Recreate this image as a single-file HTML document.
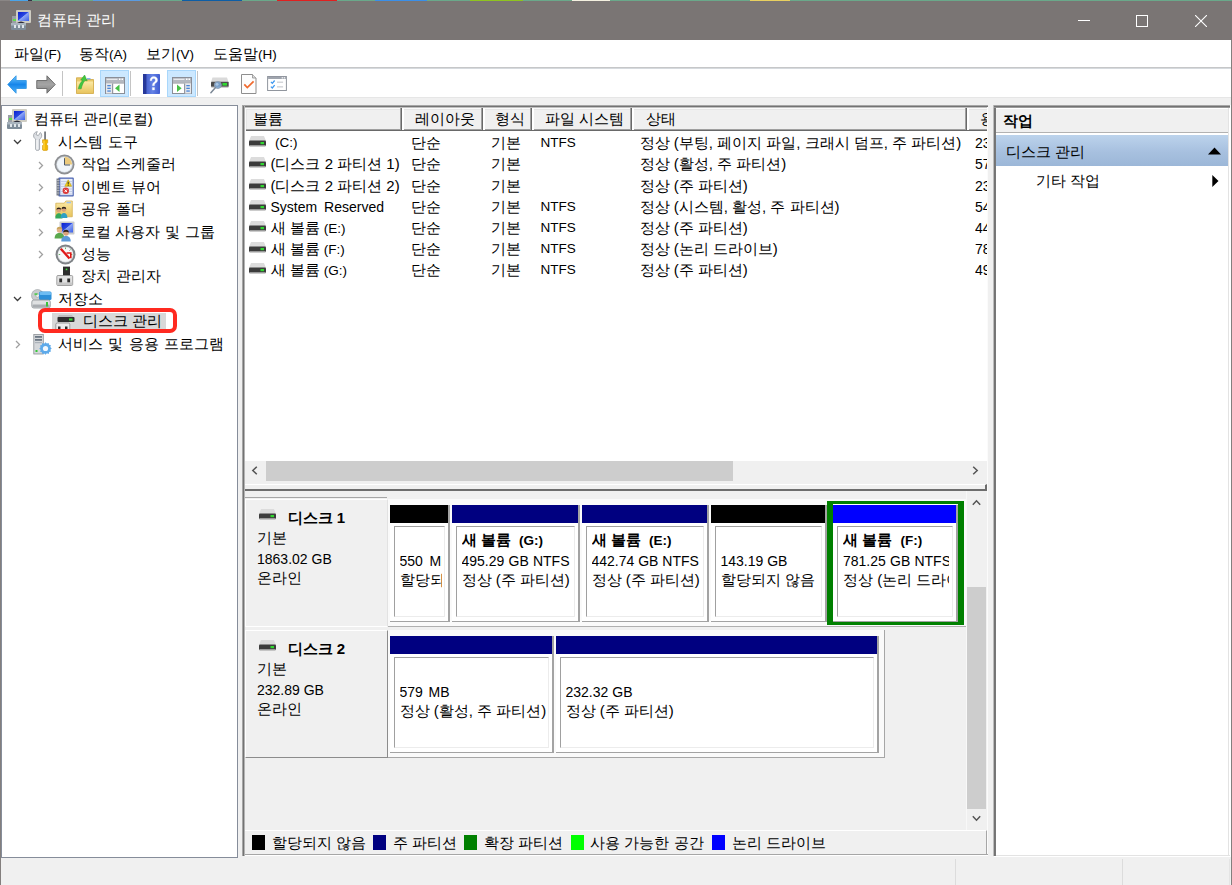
<!DOCTYPE html>
<html lang="ko">
<head>
<meta charset="utf-8">
<title>컴퓨터 관리</title>
<style>
html,body{margin:0;padding:0}
body{width:1232px;height:885px;position:relative;overflow:hidden;background:#f0f0f0;
 font-family:"Liberation Sans",sans-serif;font-size:15px;color:#000}
div,span,svg{position:absolute;box-sizing:border-box}
.t{white-space:nowrap;height:20px;line-height:20px;text-align:justify;text-align-last:justify;overflow:visible}
.b{font-weight:bold}
.l{font-size:14px}
.s{font-size:13.5px}
/* window chrome */
#strip{left:0;top:0;width:1232px;height:1px;background:linear-gradient(90deg,#8a8685 0 10px,#4aa3e8 10px 28px,#334 28px 32px,#6aa88a 32px 93px,#5b9be0 93px 140px,#6aa88a 140px 182px,#0d5ea6 182px 242px,#6aa88a 242px 277px,#e02020 277px 337px,#6aa88a 337px 375px,#3b8fe8 375px 427px,#6aa88a 427px 470px,#8fc31f 470px 523px,#6aa88a 523px 572px,#f4f0e0 572px 610px,#6aa88a 610px 750px,#e8d060 750px 790px,#6aa88a 790px 1232px)}
#title{left:0;top:1px;width:1232px;height:39px;background:#7a7574}
.w{color:#fff}
.p{position:static;font-size:13.5px}
#winL{left:0;top:40px;width:1px;height:845px;background:#837f7e}
#winR{left:1231px;top:40px;width:1px;height:845px;background:#837f7e}
#menu{left:1px;top:40px;width:1230px;height:27px;background:#fff}
#msep{left:1px;top:67px;width:1230px;height:2px;background:linear-gradient(#c6c7c8 0 1px,#d6dade 1px 2px)}
#tool{left:1px;top:69px;width:1230px;height:28px;background:#fff}
#tsep{left:1px;top:97px;width:1230px;height:1px;background:#e6e6e6}
.hl{background:#cce8ff;border:1px solid #a9d7fb}
.vs{width:1px;background:#c4c4c4}
/* panes */
#left{left:1px;top:105px;width:237px;height:753px;background:#fff;border:1px solid #868d9a}
#mid{left:242px;top:105px;width:746px;height:751px;background:#f0f0f0}
#right{left:994px;top:105px;width:237px;height:752px;background:#fff}
#status{left:1px;top:858px;width:1230px;height:27px;background:#f0f0f0}
</style>
</head>
<body>
<div id="strip"></div>
<svg width="0" height="0" style="left:0;top:0">
<defs>
<linearGradient id="gBlue" x1="0" y1="0" x2="0" y2="1"><stop offset="0" stop-color="#6fc6ff"/><stop offset=".5" stop-color="#1686ea"/><stop offset="1" stop-color="#4fb2fa"/></linearGradient>
<linearGradient id="gGray" x1="0" y1="0" x2="0" y2="1"><stop offset="0" stop-color="#8e8e8e"/><stop offset=".5" stop-color="#a4a4a4"/><stop offset="1" stop-color="#7e7e7e"/></linearGradient>
<linearGradient id="gScr" x1="0" y1="0" x2="1" y2="1"><stop offset="0" stop-color="#0a1ed0"/><stop offset=".45" stop-color="#2a48e0"/><stop offset=".5" stop-color="#8fa6f5"/><stop offset="1" stop-color="#3a5fe8"/></linearGradient>
<linearGradient id="gFold" x1="0" y1="0" x2="0" y2="1"><stop offset="0" stop-color="#fbe9a4"/><stop offset="1" stop-color="#e8c45e"/></linearGradient>
<linearGradient id="gHelp" x1="0" y1="0" x2="1" y2="0"><stop offset="0" stop-color="#3a52c4"/><stop offset=".55" stop-color="#6482e6"/><stop offset="1" stop-color="#3f5bd0"/></linearGradient>
<symbol id="drv" viewBox="0 0 17 11"><path d="M2 0h13l2 5H0z" fill="#dcdcdc"/><rect x="0" y="4.5" width="17" height="5.5" rx="1" fill="#3c3c3c"/><rect x="0.5" y="9" width="16" height="1.5" fill="#9a9a9a"/><rect x="11.5" y="6" width="3.5" height="2.2" fill="#2fd72f"/></symbol>
<symbol id="cmp" viewBox="0 0 20 20"><rect x="1" y="6" width="6" height="9" fill="#9aa0a6"/><rect x="2" y="9" width="3" height="2" fill="#5fe04a"/><rect x="5" y="0" width="15" height="13" rx="1" fill="#cfcdc3"/><rect x="7" y="2" width="11" height="9" fill="url(#gScr)"/><path d="M6 13q4-3 8 0z" fill="#2b2b3a"/><rect x="0" y="13" width="15" height="7" rx="1" fill="#7e8c99"/><rect x="0" y="13" width="15" height="2.5" fill="#a9b4be"/><rect x="3" y="15" width="2" height="3" fill="#dfe5ea"/><rect x="7" y="15" width="2" height="3" fill="#dfe5ea"/><rect x="11" y="15" width="2" height="3" fill="#dfe5ea"/></symbol>
<symbol id="winic" viewBox="0 0 20 17"><rect x=".5" y=".5" width="19" height="16" fill="#fff" stroke="#8a8e97"/><rect x="1" y="1" width="18" height="4.500" fill="#b4b8c0"/><rect x="1.500" y="1.800" width="11" height="1" fill="#f4f5f7"/><rect x="14" y="1.500" width="1.500" height="1.500" fill="#fff"/><rect x="16.500" y="1.500" width="1.500" height="1.500" fill="#fff"/><rect x="1" y="5.500" width="18" height="1" fill="#8a8e97"/></symbol>
</defs></svg>
<div id="title"></div>
<svg style="left:11px;top:10px" width="20" height="20"><use href="#cmp"/></svg>
<span class="t w" style="left:36.5px;top:10px;width:78px">컴퓨터 관리</span>
<div style="left:1078px;top:20px;width:12px;height:1px;background:#fff"></div>
<div style="left:1136px;top:15px;width:12px;height:12px;border:1px solid #fff"></div>
<svg style="left:1195px;top:15px" width="12" height="12" viewBox="0 0 12 12"><path d="M0 0L12 12M12 0L0 12" stroke="#fff" stroke-width="1.1"/></svg>
<div id="winL"></div><div id="winR"></div>
<div id="menu"></div>
<span class="t" style="left:14px;top:44px;width:44px">파일<span class="p">(F)</span></span>
<span class="t" style="left:79px;top:44px;width:47px">동작<span class="p">(A)</span></span>
<span class="t" style="left:146px;top:44px;width:47px">보기<span class="p">(V)</span></span>
<span class="t" style="left:213px;top:44px;width:62px">도움말<span class="p">(H)</span></span>
<div id="msep"></div>
<div id="tool"></div>
<div id="tsep"></div>
<!-- toolbar icons -->
<svg style="left:7px;top:75px" width="20" height="19" viewBox="0 0 21 19" preserveAspectRatio="none"><path d="M.8 9.5L9.5.8V5.5H20.2V13.5H9.5V18.2z" fill="url(#gBlue)" stroke="#3a9be6" stroke-width="1" stroke-linejoin="round"/></svg>
<svg style="left:36px;top:75px" width="20" height="19" viewBox="0 0 21 19" preserveAspectRatio="none"><path d="M20.2 9.5L11.5.8V5.5H.8V13.5H11.5V18.2z" fill="url(#gGray)" stroke="#6e6e6e" stroke-width="1" stroke-linejoin="round"/></svg>
<div class="vs" style="left:62px;top:71px;height:25px"></div>
<svg style="left:76px;top:74px" width="19" height="21" viewBox="0 0 19 21"><path d="M.5 3.800h6.300l1 1.700h9.700v14H.5z" fill="#e9c96a" stroke="#cfa640" stroke-width=".8"/><rect x="1" y="7.500" width="16" height="11.600" fill="url(#gFold)"/><rect x="11" y="4.200" width="3.500" height="1.200" fill="#6aa5e8"/><path d="M2.300 14.800C3.200 10.500 4.800 8 6.800 6.500L4.700 6 8.600 1 11.200 6.800 9 6.500C7.300 8.500 6 11 5.200 14.800z" fill="#41c741" stroke="#2f9e2f" stroke-width=".5"/></svg>
<div class="hl" style="left:100px;top:70px;width:29px;height:27px"></div>
<svg style="left:105px;top:77px" width="20" height="17"><use href="#winic"/><rect x="1" y="6.500" width="6" height="10" fill="#e6e8ec"/><rect x="2.300" y="8" width="3.500" height="1.300" fill="#4a86d8"/><rect x="2.300" y="10.700" width="3.500" height="1.300" fill="#4a86d8"/><rect x="2.300" y="13.400" width="3.500" height="1.300" fill="#4a86d8"/><rect x="7" y="6.500" width="1.200" height="10" fill="#9498a0"/><path d="M14.500 7.500v7.500L10 11.200z" fill="#45c045"/></svg>
<div class="vs" style="left:130px;top:71px;height:25px"></div>
<svg style="left:143px;top:74px" width="17" height="20" viewBox="0 0 17 20"><rect width="17" height="20" rx=".8" fill="url(#gHelp)"/><rect width="3.400" height="20" fill="#27389a"/><path d="M7 6.700C7 3.900 8.800 2.500 10.800 2.500c2.200 0 3.800 1.400 3.800 3.400 0 1.600-.9 2.400-1.900 3.200-.9.700-1.200 1.200-1.200 2.600h-2.100c0-1.900.6-2.700 1.600-3.500.8-.6 1.300-1.100 1.300-2.100s-.7-1.700-1.700-1.700c-1.200 0-1.800.8-1.800 2.300zM9.300 13.500h2.300v2.500H9.300z" fill="#fff" stroke="#dfe6f8" stroke-width=".3"/></svg>
<div class="hl" style="left:167px;top:70px;width:29px;height:27px"></div>
<svg style="left:172px;top:77px" width="20" height="17"><use href="#winic"/><rect x="13" y="6.500" width="6" height="10" fill="#e6e8ec"/><rect x="12" y="6.500" width="1.200" height="10" fill="#9498a0"/><rect x="14.300" y="8" width="3.500" height="1.300" fill="#4a86d8"/><rect x="14.300" y="10.700" width="3.500" height="1.300" fill="#4a86d8"/><rect x="14.300" y="13.400" width="3.500" height="1.300" fill="#4a86d8"/><path d="M5 7.500v7.500l4.600-3.800z" fill="#45c045"/></svg>
<div class="vs" style="left:197px;top:71px;height:25px"></div>
<svg style="left:210px;top:77px" width="20" height="17" viewBox="0 0 20 17"><path d="M2.500 .5h14.500l1.500 4.500H1z" fill="#dadada"/><rect x="1" y="4.800" width="17.700" height="5.200" rx=".8" fill="#4c4c4c"/><rect x="1.300" y="9.600" width="17.100" height="1.200" fill="#c4c4c4"/><rect x="12.500" y="6" width="4.500" height="2.600" fill="#2fd72f"/><circle cx="7.800" cy="8" r="3.500" fill="#7da7d4" fill-opacity=".9" stroke="#8f9db0" stroke-width=".9"/><circle cx="7" cy="7.200" r="1.500" fill="#b7d0ea" fill-opacity=".8"/><path d="M5.300 10.800L.9 15.800" stroke="#7c8896" stroke-width="1.500" stroke-linecap="round"/></svg>
<svg style="left:241px;top:74px" width="16" height="20" viewBox="0 0 16 20"><path d="M.5.5h11l3.500 3.500v15.500H.5z" fill="#fdfdfd" stroke="#8e8e8e"/><path d="M11.500.5v3.500h3.500" fill="#dedede" stroke="#8e8e8e" stroke-width=".8"/><path d="M3.300 10.300l3 3.200 6.300-6.200" fill="none" stroke="#f06a2e" stroke-width="1.700"/></svg>
<svg style="left:267px;top:76px" width="20" height="15" viewBox="0 0 21 16"><rect x=".5" y=".5" width="20" height="15" fill="#fff" stroke="#8a8f98"/><rect x="1" y="1" width="19" height="2.200" fill="#a0a5ae"/><rect x="15.500" y="1.300" width="1.300" height="1.300" fill="#fff"/><rect x="17.700" y="1.300" width="1.300" height="1.300" fill="#fff"/><path d="M4 6.300l1.500 1.500 2.500-3M4 11.300l1.500 1.500 2.500-3" fill="none" stroke="#419af0" stroke-width="1.400"/><rect x="10.500" y="6" width="6.500" height="1.200" fill="#c6c9ce"/><rect x="10.500" y="11" width="6.500" height="1.200" fill="#c6c9ce"/></svg>
<div id="left"></div>
<svg style="left:7px;top:109.0px" width="20" height="20"><use href="#cmp"/></svg>
<span class="t" style="left:33.5px;top:109px;width:118px">컴퓨터 관리(로컬)</span>
<svg style="left:12.6px;top:139.4px" width="9" height="6" viewBox="0 0 9 6"><path d="M1 1l3.500 3.500L8 1" fill="none" stroke="#3c3c3c" stroke-width="1.300"/></svg>
<svg style="left:33px;top:131px" width="16" height="20" viewBox="0 0 16 20"><path d="M4.300.6C2 .9.400 2.800.6 5c.1 1.400.9 2.500 2 3.100V18.200c0 1.600 4 1.600 4 0V8.100C8 7.300 8.900 5.800 8.700 4.100 8.600 3 8.100 2.100 7.400 1.500L5.300 4.600 3 3.600z" fill="#dfe2e6" stroke="#8b9098" stroke-width=".7"/><path d="M4 9v9.500" stroke="#fff" stroke-width="1"/><rect x="11.300" y=".5" width="1.500" height="8.500" fill="#5a5f66"/><path d="M9.500 8.800h5.200v3l-1 1 .0 .8 1 .9v4.200c0 1.200-5.200 1.200-5.200 0v-4.200l1-.9v-.8l-1-1z" fill="#f3b700" stroke="#c98f00" stroke-width=".5"/><path d="M11 9.500v9" stroke="#ffd95a" stroke-width="1"/></svg>
<span class="t" style="left:58px;top:131.9px;width:80px">시스템 도구</span>
<svg style="left:38px;top:160.7px" width="6" height="9" viewBox="0 0 6 9"><path d="M1 1l3.500 3.500L1 8" fill="none" stroke="#a0a0a0" stroke-width="1.300"/></svg>
<svg style="left:54.300px;top:153.500px" width="21" height="21" viewBox="0 0 21 21"><circle cx="10.500" cy="10.500" r="10" fill="#8d8f92"/><circle cx="10.500" cy="10.500" r="8.300" fill="#c9cfd6"/><circle cx="10.500" cy="10.500" r="7.500" fill="#f1f6fb"/><path d="M10.500 10.500V2.800A7.700 7.700 0 0 1 18.200 10.500z" fill="#ecca7c"/><path d="M10.500 4.200V11h5.500" fill="none" stroke="#4c5866" stroke-width="1"/></svg>
<span class="t" style="left:80.5px;top:154.3px;width:96px">작업 스케줄러</span>
<svg style="left:38px;top:183.2px" width="6" height="9" viewBox="0 0 6 9"><path d="M1 1l3.500 3.500L1 8" fill="none" stroke="#a0a0a0" stroke-width="1.300"/></svg>
<svg style="left:55.500px;top:176.800px" width="19" height="20" viewBox="0 0 19 20"><rect x="2.300" y=".6" width="15.500" height="18.800" rx="1" fill="#5068b4"/><rect x="4.300" y="1.800" width="12.300" height="16.400" fill="#e6ecf8"/><path d="M4.500 4.500h12M4.500 7h12M4.500 9.500h12M4.500 12h12M4.500 14.500h12M4.500 17h12" stroke="#b4c0e0" stroke-width=".7"/><rect x=".5" y="1.500" width="2.800" height="17" fill="#787e8a"/><path d="M.5 3.500h3M.5 6h3M.5 8.500h3M.5 11h3M.5 13.500h3M.5 16h3" stroke="#c8ccd4" stroke-width=".7"/><path d="M12.200 2.800l3.400 6.400H8.800z" fill="#f5d21a" stroke="#b89600" stroke-width=".5"/><rect x="11.700" y="4.800" width="1" height="2.600" fill="#2a2a2a"/><rect x="11.700" y="7.900" width="1" height=".8" fill="#2a2a2a"/><circle cx="9.800" cy="13.800" r="3.200" fill="#dc3a3a"/><path d="M8.600 12.600l2.400 2.400M11 12.600l-2.400 2.400" stroke="#fff" stroke-width="1"/></svg>
<span class="t" style="left:80.5px;top:176.8px;width:80.5px">이벤트 뷰어</span>
<svg style="left:38px;top:205.6px" width="6" height="9" viewBox="0 0 6 9"><path d="M1 1l3.500 3.500L1 8" fill="none" stroke="#a0a0a0" stroke-width="1.300"/></svg>
<svg style="left:54.500px;top:199.200px" width="20" height="20" viewBox="0 0 20 20"><path d="M.8 4.200h8.500l1.500-2.200h6.500v15.800H.8z" fill="url(#gFold)" stroke="#d0aa48" stroke-width=".7"/><rect x="11.500" y="2.800" width="4.500" height="1.500" fill="#9cc0ee"/><path d="M.3 19.500c0-3.800 1.600-5.200 3.600-5.200s3.600 1.400 3.600 5.200z" fill="#35a85a"/><path d="M5.600 19c0-3.600 1.500-5 3.400-5s3.400 1.400 3.400 5z" fill="#2f9fc4"/><circle cx="3.800" cy="11.200" r="2.300" fill="#d9a27a"/><path d="M1.400 10.800a2.400 2.400 0 0 1 4.800 0c-1.200-1-3.600-1-4.800 0z" fill="#2e221b"/><circle cx="8.900" cy="10.600" r="2.300" fill="#d9a27a"/><path d="M6.500 10.200a2.400 2.400 0 0 1 4.800 0c-1.200-1-3.600-1-4.800 0z" fill="#2e221b"/></svg>
<span class="t" style="left:80.5px;top:199.2px;width:66px">공유 폴더</span>
<svg style="left:38px;top:228.0px" width="6" height="9" viewBox="0 0 6 9"><path d="M1 1l3.500 3.500L1 8" fill="none" stroke="#a0a0a0" stroke-width="1.300"/></svg>
<svg style="left:54px;top:221.100px" width="21" height="21" viewBox="0 0 21 21"><rect x="5.500" y=".5" width="15" height="13" rx="1" fill="#c9cacc"/><rect x="7.500" y="2" width="11.500" height="9.500" fill="url(#gScr)"/><path d="M.6 17.500c0-4 2.100-5.600 4.900-5.600s4.900 1.600 4.900 5.600z" fill="#5aa84e"/><circle cx="5.500" cy="9" r="2.700" fill="#e2b48a"/><path d="M2.700 8.600a2.800 2.800 0 0 1 5.600 0c-1.400-1.100-4.200-1.100-5.600 0z" fill="#c9a45c"/><path d="M7.300 20.500c0-3.900 2-5.400 4.700-5.400s4.700 1.500 4.700 5.400z" fill="#5d9ad8"/><circle cx="12" cy="12" r="2.700" fill="#d9a27a"/><path d="M9.200 11.600a2.800 2.800 0 0 1 5.600 0c-1.400-1.100-4.200-1.100-5.600 0z" fill="#2e221b"/></svg>
<span class="t" style="left:80.5px;top:221.6px;width:135px">로컬 사용자 및 그룹</span>
<svg style="left:38px;top:250.4px" width="6" height="9" viewBox="0 0 6 9"><path d="M1 1l3.500 3.500L1 8" fill="none" stroke="#a0a0a0" stroke-width="1.300"/></svg>
<svg style="left:54.500px;top:243.500px" width="21" height="21" viewBox="0 0 21 21"><circle cx="10.500" cy="10.500" r="10" fill="#7f8387"/><circle cx="10.500" cy="10.500" r="8" fill="#d5d9dc"/><circle cx="10.500" cy="10.500" r="7.300" fill="#f8f9fa"/><path d="M10.500 3.500v1.600M15.500 5.500l-1 1.100M5.500 5.500l1 1.100M17.300 10.500h-1.500M3.700 10.500h1.500" stroke="#5aa85a" stroke-width=".9"/><path d="M5.800 4.800l8.700 9.700" stroke="#e01818" stroke-width="2.300"/><path d="M11.500 9h4.300v5.300" fill="none" stroke="#e01818" stroke-width="1.600"/></svg>
<span class="t" style="left:80.5px;top:244.0px;width:31px">성능</span>
<svg style="left:55.500px;top:266.400px" width="18" height="20" viewBox="0 0 18 20"><rect x="7" y=".6" width="7" height="9.400" fill="#2d2d2d"/><rect x="9.700" y="2.600" width="1.600" height="1.600" fill="#45e045"/><path d="M.8 10.700q0-1.200 1.200-1.200h13.500q1.200 0 1.200 1.200v7.600q0 1.200-1.200 1.200H2q-1.200 0-1.200-1.200z" fill="#e2e2e2" stroke="#8c8c8c" stroke-width=".8"/><rect x="1.300" y="16.500" width="14.900" height="2.500" fill="#c8c8c8"/><rect x="3.300" y="12.500" width="2.800" height="3.800" fill="#2d2d2d"/><rect x="11.300" y="12.500" width="2.800" height="3.800" fill="#2d2d2d"/></svg>
<span class="t" style="left:80.5px;top:266.4px;width:80.5px">장치 관리자</span>
<svg style="left:12.6px;top:296.4px" width="9" height="6" viewBox="0 0 9 6"><path d="M1 1l3.500 3.500L8 1" fill="none" stroke="#3c3c3c" stroke-width="1.300"/></svg>
<svg style="left:31px;top:288.9px" width="21" height="20" viewBox="0 0 21 20"><circle cx="6.500" cy="6.500" r="6" fill="#c9ccce" stroke="#9a9fa3" stroke-width=".6"/><circle cx="6.500" cy="6.500" r="1.800" fill="#f3f3f3" stroke="#8f9498" stroke-width=".5"/><rect x="3.500" y="4.200" width="3" height="2" fill="#58c858"/><rect x="8" y="2.500" width="12.500" height="8.500" rx="1.500" fill="#2c8fd8"/><rect x="8.500" y="3" width="11.500" height="3" rx="1" fill="#6dbcf2"/><rect x=".8" y="11" width="18.500" height="8" rx="2" fill="#dfe1e2" stroke="#8e9397" stroke-width=".8"/><rect x="1.500" y="15.500" width="17" height="3" rx="1" fill="#a9adb1"/><rect x="15" y="13" width="2" height="4.500" fill="#3bc43b"/></svg>
<span class="t" style="left:58px;top:288.9px;width:43.5px">저장소</span>
<div style="left:52px;top:313px;width:114px;height:17px;background:#d8d8d8"></div>
<svg style="left:55px;top:314px" width="20" height="16" viewBox="0 0 20 16"><path d="M4 1h13l2 3H2z" fill="#bdbdbd"/><rect x="2.500" y="3" width="17" height="5" rx="1" fill="#2e2e2e"/><rect x="14" y="4.500" width="3.500" height="2" fill="#35e035"/><path d="M.8 10.500q0-1.500 1.500-1.500h11q1.500 0 1.500 1.500V16H.8z" fill="#ececec" stroke="#8a8a8a" stroke-width=".8"/><rect x="3" y="12.500" width="2.500" height="3.500" fill="#2b2b2b"/><rect x="10" y="12.500" width="2.500" height="3.500" fill="#2b2b2b"/></svg>
<span class="t" style="left:82.5px;top:311.3px;width:76.5px">디스크 관리</span>
<div style="left:38px;top:308px;width:139px;height:25px;border:4px solid #ff2a20;border-radius:7px"></div>
<svg style="left:14.5px;top:340.1px" width="6" height="9" viewBox="0 0 6 9"><path d="M1 1l3.500 3.500L1 8" fill="none" stroke="#a0a0a0" stroke-width="1.300"/></svg>
<svg style="left:33px;top:333.7px" width="19" height="21" viewBox="0 0 19 21"><rect x=".8" y=".5" width="9.500" height="19.500" fill="#d5d8db" stroke="#8c9196" stroke-width=".8"/><rect x="2" y="2" width="7" height="1.800" fill="#6b7784"/><rect x="2" y="5" width="7" height="1.800" fill="#6b7784"/><rect x="2" y="8" width="7" height="1.200" fill="#aab1b8"/><rect x="2.500" y="16" width="2" height="2" fill="#37c837"/><g transform="translate(12.500 14.500)"><path d="M0-6.200l1.300 1.300 1.800-.6.500 1.800 1.800.5-.6 1.800L6.200 0 4.900 1.300l.6 1.800-1.800.5-.5 1.800-1.800-.6L0 6.200-1.300 4.900l-1.800.6-.5-1.800-1.800-.5.600-1.800L-6.200 0l1.300-1.300-.6-1.800 1.800-.5.500-1.800 1.800.6z" fill="#5eaaea"/><circle r="2.600" fill="#f2f8fe"/></g></svg>
<span class="t" style="left:58px;top:333.7px;width:166px">서비스 및 응용 프로그램</span>
<div id="mid"></div>
<div style="left:245px;top:107px;width:742px;height:378px;background:#fff"></div>
<div style="left:245px;top:108px;width:742px;height:23px;background:#f0f0f0;border-top:1px solid #fafafa;border-left:1px solid #fafafa;box-shadow:inset 0 -1px 0 #696969,inset 0 -2px 0 #a0a0a0,inset 1px 1px 0 #e6e6e6"></div>
<div style="left:400px;top:108px;width:4px;height:22px;background:linear-gradient(90deg,#a0a0a0 0 1px,#696969 1px 2px,#fff 2px 4px)"></div>
<div style="left:401px;top:107px;width:1px;height:24px;background:#696969"></div>
<div style="left:481px;top:108px;width:4px;height:22px;background:linear-gradient(90deg,#a0a0a0 0 1px,#696969 1px 2px,#fff 2px 4px)"></div>
<div style="left:482px;top:107px;width:1px;height:24px;background:#696969"></div>
<div style="left:530px;top:108px;width:4px;height:22px;background:linear-gradient(90deg,#a0a0a0 0 1px,#696969 1px 2px,#fff 2px 4px)"></div>
<div style="left:531px;top:107px;width:1px;height:24px;background:#696969"></div>
<div style="left:630px;top:108px;width:4px;height:22px;background:linear-gradient(90deg,#a0a0a0 0 1px,#696969 1px 2px,#fff 2px 4px)"></div>
<div style="left:631px;top:107px;width:1px;height:24px;background:#696969"></div>
<div style="left:965px;top:108px;width:4px;height:22px;background:linear-gradient(90deg,#a0a0a0 0 1px,#696969 1px 2px,#fff 2px 4px)"></div>
<div style="left:966px;top:107px;width:1px;height:24px;background:#696969"></div>
<span class="t" style="left:252.5px;top:109px;width:29px">볼륨</span>
<span class="t" style="left:415px;top:109px;width:60px">레이아웃</span>
<span class="t" style="left:495px;top:109px;width:29px">형식</span>
<span class="t" style="left:545px;top:109px;width:78.5px">파일 시스템</span>
<span class="t" style="left:646px;top:109px;width:29px">상태</span>
<div style="left:980px;top:109px;width:7px;height:20px;overflow:hidden"><span class="t" style="left:0;top:0">용량</span></div>
<svg style="left:249px;top:136.1px" width="17" height="11"><use href="#drv"/></svg>
<span class="t s" style="left:275px;top:133.1px;width:21px">(C:)</span>
<span class="t" style="left:411px;top:133.1px;width:29px">단순</span>
<span class="t" style="left:491px;top:133.1px;width:29px">기본</span>
<span class="t s" style="left:540.5px;top:133.1px;width:33.5px">NTFS</span>
<span class="t" style="left:639.5px;top:133.1px;width:320px">정상 (부팅, 페이지 파일, 크래시 덤프, 주 파티션)</span>
<div style="left:975px;top:133.1px;width:12px;height:20px;overflow:hidden"><span class="t l" style="left:0;top:0">237</span></div>
<svg style="left:249px;top:157.3px" width="17" height="11"><use href="#drv"/></svg>
<span class="t" style="left:270.5px;top:154.3px;width:127px">(디스크 2 파티션 1)</span>
<span class="t" style="left:411px;top:154.3px;width:29px">단순</span>
<span class="t" style="left:491px;top:154.3px;width:29px">기본</span>
<span class="t" style="left:639.5px;top:154.3px;width:144.5px">정상 (활성, 주 파티션)</span>
<div style="left:975px;top:154.3px;width:12px;height:20px;overflow:hidden"><span class="t l" style="left:0;top:0">579</span></div>
<svg style="left:249px;top:178.5px" width="17" height="11"><use href="#drv"/></svg>
<span class="t" style="left:270.5px;top:175.5px;width:127px">(디스크 2 파티션 2)</span>
<span class="t" style="left:411px;top:175.5px;width:29px">단순</span>
<span class="t" style="left:491px;top:175.5px;width:29px">기본</span>
<span class="t" style="left:639.5px;top:175.5px;width:107px">정상 (주 파티션)</span>
<div style="left:975px;top:175.5px;width:12px;height:20px;overflow:hidden"><span class="t l" style="left:0;top:0">232</span></div>
<svg style="left:249px;top:199.7px" width="17" height="11"><use href="#drv"/></svg>
<span class="t l" style="left:270.5px;top:196.7px;width:113.5px">System Reserved</span>
<span class="t" style="left:411px;top:196.7px;width:29px">단순</span>
<span class="t" style="left:491px;top:196.7px;width:29px">기본</span>
<span class="t s" style="left:540.5px;top:196.7px;width:33.5px">NTFS</span>
<span class="t" style="left:639.5px;top:196.7px;width:196px">정상 (시스템, 활성, 주 파티션)</span>
<div style="left:975px;top:196.7px;width:12px;height:20px;overflow:hidden"><span class="t l" style="left:0;top:0">549</span></div>
<svg style="left:249px;top:220.9px" width="17" height="11"><use href="#drv"/></svg>
<span class="t" style="left:270.5px;top:217.9px;width:72.5px">새 볼륨 <span class="p">(E:)</span></span>
<span class="t" style="left:411px;top:217.9px;width:29px">단순</span>
<span class="t" style="left:491px;top:217.9px;width:29px">기본</span>
<span class="t s" style="left:540.5px;top:217.9px;width:33.5px">NTFS</span>
<span class="t" style="left:639.5px;top:217.9px;width:107px">정상 (주 파티션)</span>
<div style="left:975px;top:217.9px;width:12px;height:20px;overflow:hidden"><span class="t l" style="left:0;top:0">442</span></div>
<svg style="left:249px;top:242.1px" width="17" height="11"><use href="#drv"/></svg>
<span class="t" style="left:270.5px;top:239.1px;width:72px">새 볼륨 <span class="p">(F:)</span></span>
<span class="t" style="left:411px;top:239.1px;width:29px">단순</span>
<span class="t" style="left:491px;top:239.1px;width:29px">기본</span>
<span class="t s" style="left:540.5px;top:239.1px;width:33.5px">NTFS</span>
<span class="t" style="left:639.5px;top:239.1px;width:137px">정상 (논리 드라이브)</span>
<div style="left:975px;top:239.1px;width:12px;height:20px;overflow:hidden"><span class="t l" style="left:0;top:0">781</span></div>
<svg style="left:249px;top:263.3px" width="17" height="11"><use href="#drv"/></svg>
<span class="t" style="left:270.5px;top:260.3px;width:74.5px">새 볼륨 <span class="p">(G:)</span></span>
<span class="t" style="left:411px;top:260.3px;width:29px">단순</span>
<span class="t" style="left:491px;top:260.3px;width:29px">기본</span>
<span class="t s" style="left:540.5px;top:260.3px;width:33.5px">NTFS</span>
<span class="t" style="left:639.5px;top:260.3px;width:107px">정상 (주 파티션)</span>
<div style="left:975px;top:260.3px;width:12px;height:20px;overflow:hidden"><span class="t l" style="left:0;top:0">495</span></div>
<div style="left:245px;top:461px;width:742px;height:24px;background:#f0f0f0"></div>
<div style="left:266px;top:461px;width:467px;height:20px;background:#cdcdcd"></div>
<svg style="left:251px;top:466px" width="7" height="9" viewBox="0 0 7 9"><path d="M5.800.8L1.800 4.500 5.800 8.200" fill="none" stroke="#555" stroke-width="1.500"/></svg>
<svg style="left:972px;top:466px" width="7" height="9" viewBox="0 0 7 9"><path d="M1.200.8L5.200 4.500 1.200 8.200" fill="none" stroke="#555" stroke-width="1.500"/></svg>
<div style="left:245px;top:484px;width:742px;height:7px;background:#f0f0f0;border-top:1px solid #fff;border-bottom:2px solid #6d6d6d;border-right:2px solid #6d6d6d"></div>
<div style="left:242px;top:105px;width:746px;height:3px;background:linear-gradient(#a6a6a6 0 1px,#737373 1px 2px,#c0c0c0 2px 3px)"></div>
<div style="left:242px;top:106px;width:3px;height:750px;background:linear-gradient(90deg,#a6a6a6 0 1px,#737373 1px 2px,#b4b4b4 2px 3px)"></div>
<div style="left:987px;top:107px;width:1px;height:748px;background:#fbfbfb"></div>
<div style="left:245px;top:854px;width:743px;height:2px;background:linear-gradient(#a6a6a6 0 1px,#fff 1px 2px)"></div>
<div style="left:245px;top:497px;width:142px;height:1px;background:#a6a6a6"></div>
<div style="left:245px;top:499px;width:143px;height:128px;background:#f0f0f0;border-top:1px solid #fff;border-left:1px solid #fff;border-right:1px solid #e2e2e2;border-bottom:1px solid #fff;"></div>
<svg style="left:258.5px;top:508.5px" width="17" height="11"><use href="#drv"/></svg>
<span class="t b" style="left:287.5px;top:508.0px;width:56px">디스크 1</span>
<span class="t" style="left:257px;top:527.5px;width:29px">기본</span>
<span class="t l" style="left:257px;top:548.5px">1863.02 GB</span>
<span class="t" style="left:257px;top:568.0px;width:43px">온라인</span>
<div style="left:388px;top:499px;width:578px;height:128px;background:#fafafa;border-bottom:1px solid #b0b0b0"></div>
<div style="left:390px;top:505px;width:60px;height:117px;background:#a3a3a3"></div>
<div style="left:390px;top:505px;width:58px;height:116px;background:#fff"></div>
<div style="left:390px;top:505px;width:58px;height:18px;background:#000"></div>
<div style="left:394px;top:526px;width:51px;height:91px;border-left:1px solid #a0a0a0;border-top:1px solid #a0a0a0;border-right:1px solid #ececec;border-bottom:1px solid #ececec"></div>
<div style="left:399.5px;top:527px;width:42px;height:88px;overflow:hidden">
<span class="t l" style="left:0;top:24.0px;width:51px">550 MB</span>
<span class="t" style="left:0;top:43.3px">할당되지 않음</span>
</div>
<div style="left:452px;top:505px;width:128px;height:117px;background:#a3a3a3"></div>
<div style="left:452px;top:505px;width:126px;height:116px;background:#fff"></div>
<div style="left:452px;top:505px;width:126px;height:18px;background:#000080"></div>
<div style="left:456px;top:526px;width:119px;height:91px;border-left:1px solid #a0a0a0;border-top:1px solid #a0a0a0;border-right:1px solid #ececec;border-bottom:1px solid #ececec"></div>
<div style="left:461.5px;top:527px;width:112px;height:88px;overflow:hidden">
<span class="t b" style="left:0;top:3.2px">새 볼륨&nbsp; <span class="p">(G:)</span></span>
<span class="t l" style="left:0;top:24.0px;width:108px">495.29 GB NTFS</span>
<span class="t" style="left:0;top:43.3px;width:108px">정상 (주 파티션)</span>
</div>
<div style="left:582px;top:505px;width:127px;height:117px;background:#a3a3a3"></div>
<div style="left:582px;top:505px;width:125px;height:116px;background:#fff"></div>
<div style="left:582px;top:505px;width:125px;height:18px;background:#000080"></div>
<div style="left:586px;top:526px;width:118px;height:91px;border-left:1px solid #a0a0a0;border-top:1px solid #a0a0a0;border-right:1px solid #ececec;border-bottom:1px solid #ececec"></div>
<div style="left:591.5px;top:527px;width:111px;height:88px;overflow:hidden">
<span class="t b" style="left:0;top:3.2px">새 볼륨&nbsp; <span class="p">(E:)</span></span>
<span class="t l" style="left:0;top:24.0px;width:107px">442.74 GB NTFS</span>
<span class="t" style="left:0;top:43.3px;width:108px">정상 (주 파티션)</span>
</div>
<div style="left:711px;top:505px;width:116px;height:117px;background:#a3a3a3"></div>
<div style="left:711px;top:505px;width:114px;height:116px;background:#fff"></div>
<div style="left:711px;top:505px;width:114px;height:18px;background:#000"></div>
<div style="left:715px;top:526px;width:107px;height:91px;border-left:1px solid #a0a0a0;border-top:1px solid #a0a0a0;border-right:1px solid #ececec;border-bottom:1px solid #ececec"></div>
<div style="left:720.5px;top:527px;width:100px;height:88px;overflow:hidden">
<span class="t l" style="left:0;top:24.0px;width:66.5px">143.19 GB</span>
<span class="t" style="left:0;top:43.3px;width:92.5px">할당되지 않음</span>
</div>
<div style="left:827px;top:501px;width:137px;height:124px;background:#008000"></div>
<div style="left:833px;top:504px;width:125px;height:118px;background:#f0f0f0"></div>
<div style="left:833px;top:505px;width:125px;height:117px;background:#a3a3a3"></div>
<div style="left:833px;top:504px;width:123px;height:117px;background:#fff"></div>
<div style="left:833px;top:505px;width:123px;height:18px;background:#0000ff"></div>
<div style="left:837px;top:526px;width:116px;height:91px;border-left:1px solid #a0a0a0;border-top:1px solid #a0a0a0;border-right:1px solid #ececec;border-bottom:1px solid #ececec"></div>
<div style="left:843px;top:527px;width:106px;height:88px;overflow:hidden">
<span class="t b" style="left:0;top:3.2px">새 볼륨&nbsp; <span class="p">(F:)</span></span>
<span class="t l" style="left:0;top:24.0px;width:108px">781.25 GB NTFS</span>
<span class="t" style="left:0;top:43.3px;width:137px">정상 (논리 드라이브)</span>
</div>
<div style="left:245px;top:630px;width:143px;height:128px;background:#f0f0f0;border-top:1px solid #fff;border-left:1px solid #fff;border-right:1px solid #8c8c8c;border-bottom:1px solid #8c8c8c;"></div>
<svg style="left:258.5px;top:639.5px" width="17" height="11"><use href="#drv"/></svg>
<span class="t b" style="left:287.5px;top:639.0px;width:56px">디스크 2</span>
<span class="t" style="left:257px;top:658.5px;width:29px">기본</span>
<span class="t l" style="left:257px;top:679.5px">232.89 GB</span>
<span class="t" style="left:257px;top:699.0px;width:43px">온라인</span>
<div style="left:388px;top:630px;width:497px;height:128px;background:#fafafa;border-right:1px solid #a6a6a6;border-bottom:1px solid #a6a6a6"></div>
<div style="left:390px;top:636px;width:164px;height:117px;background:#a3a3a3"></div>
<div style="left:390px;top:636px;width:162px;height:116px;background:#fff"></div>
<div style="left:390px;top:636px;width:162px;height:18px;background:#000080"></div>
<div style="left:394px;top:657px;width:155px;height:91px;border-left:1px solid #a0a0a0;border-top:1px solid #a0a0a0;border-right:1px solid #ececec;border-bottom:1px solid #ececec"></div>
<div style="left:399.5px;top:658px;width:148px;height:88px;overflow:hidden">
<span class="t l" style="left:0;top:24.0px;width:50px">579 MB</span>
<span class="t" style="left:0;top:43.3px;width:144px">정상 (활성, 주 파티션)</span>
</div>
<div style="left:556px;top:636px;width:323px;height:117px;background:#a3a3a3"></div>
<div style="left:556px;top:636px;width:321px;height:116px;background:#fff"></div>
<div style="left:556px;top:636px;width:321px;height:18px;background:#000080"></div>
<div style="left:560px;top:657px;width:314px;height:91px;border-left:1px solid #a0a0a0;border-top:1px solid #a0a0a0;border-right:1px solid #ececec;border-bottom:1px solid #ececec"></div>
<div style="left:565.5px;top:658px;width:307px;height:88px;overflow:hidden">
<span class="t l" style="left:0;top:24.0px;width:67px">232.32 GB</span>
<span class="t" style="left:0;top:43.3px;width:108px">정상 (주 파티션)</span>
</div>
<div style="left:966px;top:491px;width:21px;height:339px;background:#f0f0f0;border-left:1px solid #f8f8f8"></div>
<div style="left:967px;top:587px;width:19px;height:222px;background:#cdcdcd"></div>
<svg style="left:972px;top:499px" width="9" height="7" viewBox="0 0 9 7"><path d="M.8 5.800L4.500 1.800 8.200 5.800" fill="none" stroke="#555" stroke-width="1.500"/></svg>
<svg style="left:972px;top:815px" width="9" height="7" viewBox="0 0 9 7"><path d="M.8 1.200L4.500 5.200 8.200 1.200" fill="none" stroke="#555" stroke-width="1.500"/></svg>
<div style="left:245px;top:830px;width:742px;height:24px;background:#f0f0f0;border-top:1px solid #fff;border-right:1px solid #a6a6a6"></div>
<div style="left:252px;top:834.5px;width:13px;height:15px;background:#000"></div>
<span class="t" style="left:272px;top:832.5px;width:92.5px">할당되지 않음</span>
<div style="left:373px;top:834.5px;width:13px;height:15px;background:#000080"></div>
<span class="t" style="left:393px;top:832.5px;width:63px">주 파티션</span>
<div style="left:464px;top:834.5px;width:13px;height:15px;background:#008000"></div>
<span class="t" style="left:483.5px;top:832.5px;width:79px">확장 파티션</span>
<div style="left:570.5px;top:834.5px;width:13px;height:15px;background:#00ff00"></div>
<span class="t" style="left:590px;top:832.5px;width:114px">사용 가능한 공간</span>
<div style="left:711.5px;top:834.5px;width:13px;height:15px;background:#0000ff"></div>
<span class="t" style="left:731.5px;top:832.5px;width:94px">논리 드라이브</span>
<div id="right"></div>
<div style="left:993px;top:105px;width:3px;height:751px;background:linear-gradient(90deg,#bcbcbc 0 1px,#737373 1px 2px,#777 2px 3px)"></div>
<div style="left:994px;top:105px;width:236px;height:3px;background:linear-gradient(#a6a6a6 0 1px,#737373 1px 2px,#9a9a9a 2px 3px)"></div>
<div style="left:1228px;top:108px;width:2px;height:748px;background:linear-gradient(90deg,#e3e3e3 0 1px,#fff 1px 2px)"></div>
<div style="left:996px;top:855px;width:234px;height:2px;background:linear-gradient(#e3e3e3 0 1px,#fff 1px 2px)"></div>
<div style="left:996px;top:108px;width:232px;height:25px;background:#f0f0f0;border-top:1px solid #fff;border-bottom:1px solid #b2b2b2"></div>
<span class="t b" style="left:1003px;top:111.0px;width:29px">작업</span>
<div style="left:996px;top:135px;width:232px;height:31px;background:linear-gradient(#bcd3ec,#a7c0df 55%,#9cb7d8)"></div>
<span class="t" style="left:1005.5px;top:141.5px;width:76.5px">디스크 관리</span>
<svg style="left:1208px;top:147px" width="13" height="8" viewBox="0 0 13 8"><path d="M0 7.500L6.500.5 13 7.500z" fill="#000"/></svg>
<span class="t" style="left:1036px;top:170.5px;width:63px">기타 작업</span>
<svg style="left:1212px;top:175px" width="7" height="12" viewBox="0 0 7 12"><path d="M.3 0L6.500 6 .3 12z" fill="#000"/></svg>
<div id="status"></div>
<div style="left:955px;top:859px;width:1px;height:26px;background:#dcdcdc"></div>
<div style="left:1122px;top:859px;width:1px;height:26px;background:#dcdcdc"></div>
<div style="left:1229px;top:859px;width:1px;height:26px;background:#e4e4e4"></div>
</body>
</html>
